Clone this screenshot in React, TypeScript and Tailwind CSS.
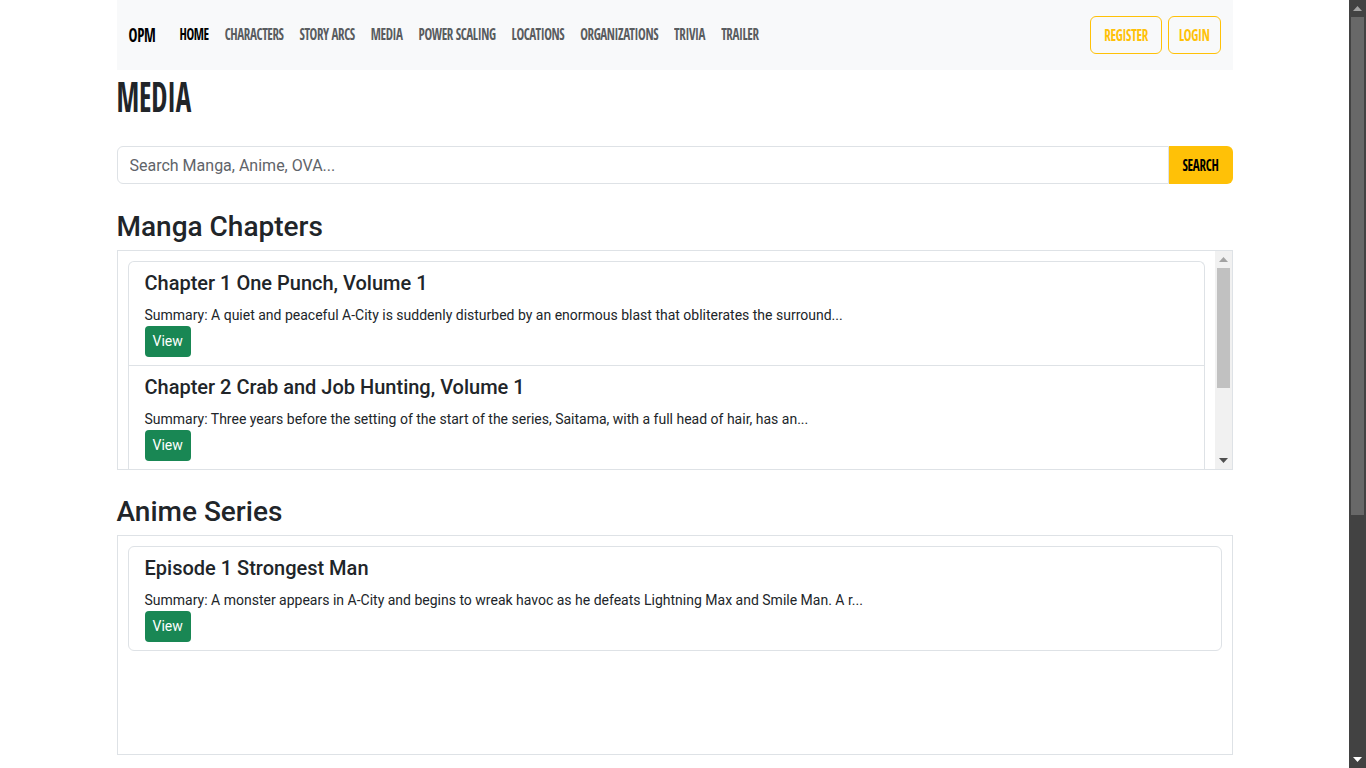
const navLinks = ["Home", "Characters", "Story Arcs", "Media", "Power Scaling", "Locations", "Organizations", "Trivia", "Trailer"];

const manga = [
  {
    title: "Chapter 1 One Punch, Volume 1",
    summary: "A quiet and peaceful A-City is suddenly disturbed by an enormous blast that obliterates the surround...",
  },
  {
    title: "Chapter 2 Crab and Job Hunting, Volume 1",
    summary: "Three years before the setting of the start of the series, Saitama, with a full head of hair, has an...",
  },
];

const anime = [
  {
    title: "Episode 1 Strongest Man",
    summary: "A monster appears in A-City and begins to wreak havoc as he defeats Lightning Max and Smile Man. A r...",
  },
];

const body = "font-['Roboto','Liberation_Sans',sans-serif]";
const bebas = "font-['Open_Sans_Condensed','Roboto_Condensed',sans-serif] font-bold uppercase";

function Arrow({ up, color }: { up?: boolean; color: string }) {
  return (
    <svg width="9" height="5" viewBox="0 0 9 5" className="block">
      <path d={up ? "M0 5 L4.5 0 L9 5 Z" : "M0 0 L4.5 5 L9 0 Z"} fill={color} />
    </svg>
  );
}

function MediaItem({ title, summary, first }: { title: string; summary: string; first?: boolean }) {
  return (
    <div className={`px-4 pt-[9px] pb-2 ${first ? "" : "border-t border-[#dee2e6]"}`}>
      <h5 className="text-[20px] leading-6 font-medium text-[#212529] mb-[10px]">{title}</h5>
      <p className="text-[14px] leading-[21px] text-[#212529] whitespace-nowrap">Summary: {summary}</p>
      <button className="block h-[31px] px-2 rounded-[4px] bg-[#198754] text-white text-[14px]">View</button>
    </div>
  );
}

// scrolled lists keep going below the fold, so their card has no visible bottom edge
function MediaCard({ items, scrolled }: { items: { title: string; summary: string }[]; scrolled?: boolean }) {
  return (
    <div
      className={`border border-[#dee2e6] bg-white ${scrolled ? "rounded-t-[6px] border-b-0 pb-4" : "rounded-[6px]"}`}
    >
      {items.map((it, i) => (
        <MediaItem key={it.title} title={it.title} summary={it.summary} first={i === 0} />
      ))}
    </div>
  );
}

export default function App() {
  return (
    <div className={`flex h-[768px] overflow-hidden bg-white ${body}`}>
      <div className="flex-1 overflow-hidden">
        <div className="w-[1116px] mx-auto">
          <nav className="h-[70px] bg-[#f8f9fa] flex items-center px-3">
            <span className={`${bebas} text-[15px] text-black inline-block scale-y-[1.35] tracking-[-0.3px] mr-4 -mt-[2px]`}>OPM</span>
            <ul className="flex items-center -mt-[2px]">
              {navLinks.map((l, i) => (
                <li key={l} className="px-2">
                  <a
                    href="#"
                    className={`${bebas} inline-block text-[13px] tracking-[-0.4px] scale-y-[1.3] ${i === 0 ? "text-black" : "text-[#595c5f]"}`}
                  >
                    {l}
                  </a>
                </li>
              ))}
            </ul>
            <div className="ml-auto flex gap-[6px]">
              <button className="h-[38px] px-[13px] border border-[#ffc107] rounded-[6px] text-[#ffc107]">
                <span className={`${bebas} inline-block text-[13px] tracking-[-0.3px] scale-y-[1.3]`}>Register</span>
              </button>
              <button className="h-[38px] px-[10px] border border-[#ffc107] rounded-[6px] text-[#ffc107]">
                <span className={`${bebas} inline-block text-[13px] tracking-[-0.3px] scale-y-[1.3]`}>Login</span>
              </button>
            </div>
          </nav>

          <div className="h-[50px] flex items-center">
            <h1 className={`${bebas} inline-block text-[29px] leading-none text-[#212529] scale-y-[1.42] tracking-[-0.2px]`}>Media</h1>
          </div>

          <div className="mt-[26px] flex h-[38px]">
            <input
              type="text"
              placeholder="Search Manga, Anime, OVA..."
              className="flex-1 h-full px-3 border border-[#dee2e6] rounded-l-[6px] text-[16px] text-[#212529] placeholder:text-[#5f6469] outline-none"
            />
            <button className="w-[64px] h-full bg-[#ffc107] rounded-r-[6px] text-black">
              <span className={`${bebas} inline-block text-[13px] tracking-[-0.3px] scale-y-[1.3]`}>Search</span>
            </button>
          </div>

          <h3 className="mt-[26px] h-[34px] leading-[34px] text-[28px] font-medium text-[#212529]">Manga Chapters</h3>
          <div className="mt-[6px] h-[220px] border border-[#dee2e6] flex">
            <div className="flex-1 p-[10px] overflow-hidden">
              <MediaCard items={manga} scrolled />
            </div>
            <div className="w-[17px] bg-[#f1f1f1] flex flex-col items-center">
              <div className="h-[17px] flex items-center justify-center">
                <Arrow up color="#a3a3a3" />
              </div>
              <div className="w-[13px] h-[120px] bg-[#c1c1c1]" />
              <div className="flex-1" />
              <div className="h-[17px] flex items-center justify-center">
                <Arrow color="#505050" />
              </div>
            </div>
          </div>

          <h3 className="mt-[25px] h-[34px] leading-[34px] text-[28px] font-medium text-[#212529]">Anime Series</h3>
          <div className="mt-[6px] h-[220px] border border-[#dee2e6] p-[10px]">
            <MediaCard items={anime} />
          </div>
        </div>
      </div>

      <div className="w-[17px] bg-[#424242] flex flex-col items-center">
        <div className="h-[17px] flex items-center justify-center">
          <Arrow up color="#a3a3a3" />
        </div>
        <div className="w-[13px] h-[498px] bg-[#686868]" />
        <div className="flex-1" />
        <div className="h-[17px] flex items-center justify-center">
          <Arrow color="#ffffff" />
        </div>
      </div>
    </div>
  );
}
